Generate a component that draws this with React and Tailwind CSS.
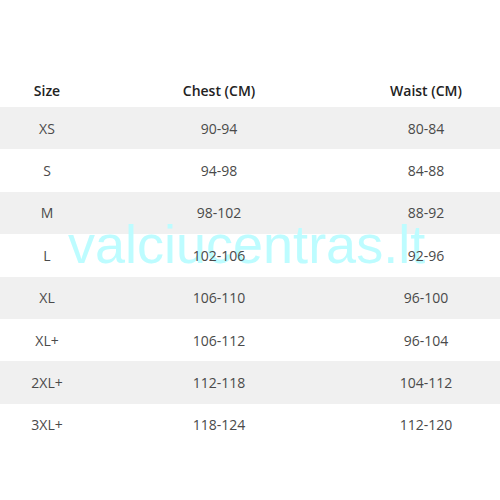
export default function App() {
  const rows = [
    ["XS", "90-94", "80-84"],
    ["S", "94-98", "84-88"],
    ["M", "98-102", "88-92"],
    ["L", "102-106", "92-96"],
    ["XL", "106-110", "96-100"],
    ["XL+", "106-112", "96-104"],
    ["2XL+", "112-118", "104-112"],
    ["3XL+", "118-124", "112-120"],
  ];
  return (
    <div className="relative w-[500px] h-[500px] bg-white overflow-hidden pt-[73px]" style={{ fontFamily: '"Open Sans", "Liberation Sans", sans-serif' }}>
      <div className="grid grid-cols-[94px_250px_1fr] h-[34px] items-center text-[14px] font-semibold text-[#222]">
        <div className="text-center">Size</div>
        <div className="text-center">Chest (CM)</div>
        <div className="text-center pl-[8px]">Waist (CM)</div>
      </div>
      {rows.map((r, i) => (
        <div key={r[0]} className={`grid grid-cols-[94px_250px_1fr] h-[42.4px] items-center text-[14px] text-[#4a4a4a] ${i % 2 === 0 ? "bg-[#f0f0f0]" : "bg-white"}`}>
          <div className="relative z-10 text-center">{r[0]}</div>
          <div className="relative z-10 text-center">{r[1]}</div>
          <div className="relative z-10 text-center pl-[8px]">{r[2]}</div>
        </div>
      ))}
      <div className="absolute z-0 left-[68px] top-[217px] text-[54px] leading-none text-[#bdfcff] pointer-events-none" style={{ fontFamily: '"Liberation Sans", Arial, sans-serif' }}>
        valciucentras.lt
      </div>
    </div>
  );
}
